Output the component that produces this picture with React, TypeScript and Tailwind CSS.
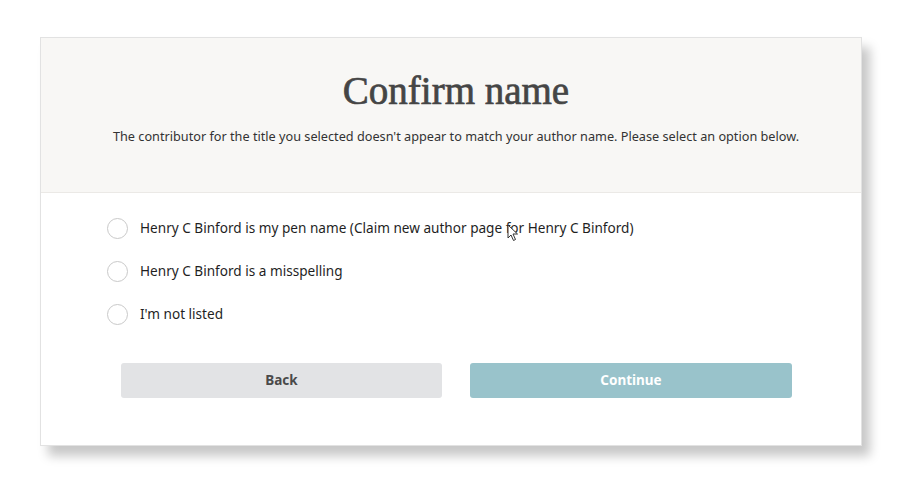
import { ReactNode } from "react";

const options = [
  "Henry C Binford is my pen name (Claim new author page for Henry C Binford)",
  "Henry C Binford is a misspelling",
  "I'm not listed",
];

function Radio({ children }: { children: ReactNode }) {
  return (
    <label className="flex items-center h-[43px] cursor-pointer">
      <span className="w-[21px] h-[21px] rounded-full border border-[#c9c9c9] bg-white shrink-0" />
      <span className="ml-[12px] text-[13.6px] text-[#1f1f1f]">{children}</span>
    </label>
  );
}

export default function App() {
  return (
    <div
      className="w-[900px] h-[494px] bg-white pt-[37px] pl-[40px]"
      style={{ fontFamily: '"Noto Sans", "Open Sans", sans-serif' }}
    >
      <div className="relative w-[822px] h-[409px] bg-white border border-[#e2e2e2] shadow-[8px_10px_10px_rgba(0,0,0,0.22)] flex flex-col">
        <header className="h-[155px] bg-[#f8f7f5] border-b border-[#ebe9e6] flex flex-col items-center pl-[10px]">
          <h1
            className="mt-[31px] text-[39px] leading-[44px] text-[#454545] [-webkit-text-stroke:0.7px_#454545]"
            style={{ fontFamily: '"Liberation Serif", serif' }}
          >
            Confirm name
          </h1>
          <p className="mt-[14px] text-[12.7px] text-[#333]">
            The contributor for the title you selected doesn't appear to match your author name. Please select an
            option below.
          </p>
        </header>
        <main className="flex-1 pl-[66px] pt-[14px]">
          {options.map((o) => (
            <Radio key={o}>{o}</Radio>
          ))}
          <div className="flex gap-[28px] ml-[14px] mt-[27px]">
            <button className="w-[321px] h-[35px] rounded-[3px] bg-[#e2e3e5] text-[13.5px] font-bold text-[#4a4a4a]">
              Back
            </button>
            <button className="w-[322px] h-[35px] rounded-[3px] bg-[#99c3cb] text-[13.5px] font-bold text-white">
              Continue
            </button>
          </div>
        </main>
        <svg className="absolute left-[466px] top-[186px]" width="12" height="18" viewBox="0 0 12 18">
          <path d="M1 1 L1 14 L4 11 L6.5 16.5 L8.5 15.5 L6 10 L10.5 10 Z" fill="white" stroke="#333" strokeWidth="1" />
        </svg>
      </div>
    </div>
  );
}
